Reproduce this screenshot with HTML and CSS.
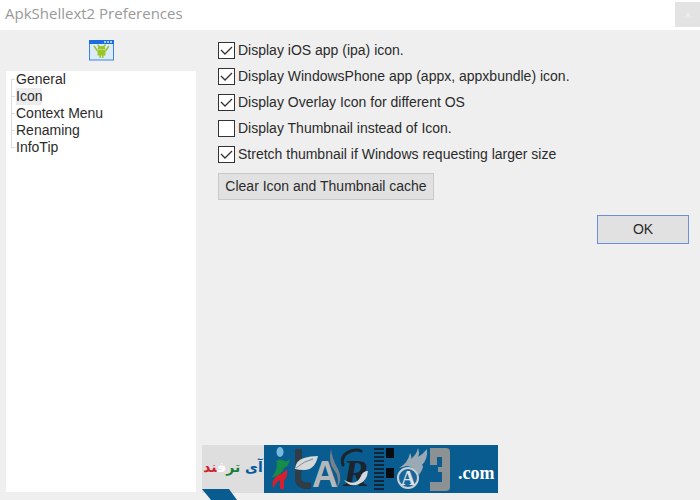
FILE: index.html
```
<!DOCTYPE html>
<html lang="en">
<head>
<meta charset="utf-8">
<title>ApkShellext2 Preferences</title>
<link rel="stylesheet" href="styles.css">
</head>
<body>
<header class="titlebar">
  <h1 class="title">ApkShellext2 Preferences</h1>
  <button class="close" type="button" aria-label="Close"><svg viewBox="0 0 8 8" width="8" height="8"><path d="M2 2l4 4M6 2l-4 4" stroke="#ececec" stroke-width="1.5"/></svg></button>
</header>
<main class="window">
  <aside class="sidebar">
    <svg class="app-icon" viewBox="0 0 25 21" width="25" height="21">
      <rect x=".5" y=".5" width="24" height="19.5" fill="#dcebfa" stroke="#3c82e8"/>
      <path d="M0 0h25v4H0z" fill="#1c6ee0"/>
      <path d="M15 1h2v2h-2zM18 1h2v2h-2zM21 1h2v2h-2z" fill="#a9cdf8"/>
      <path d="M8.500 9.500a4 3.500 0 0 1 8 0zM8.500 10h8v5.500h-2V18h-1.500v-2.500h-1V18h-1.500v-2.500h-2z" fill="#9bc527"/>
      <path d="M5.500 6.500l2.500 4M19.500 6.500l-2.500 4M9 5l1.500 2M16 5l-1.500 2" stroke="#9bc527" stroke-width="1.500" stroke-linecap="round"/>
    </svg>
    <nav class="tree">
      <ul class="tree-list">
        <li class="node"><a class="link" href="#general">General</a></li>
        <li class="node"><a class="link current" href="#icon">Icon</a></li>
        <li class="node"><a class="link" href="#context-menu">Context Menu</a></li>
        <li class="node"><a class="link" href="#renaming">Renaming</a></li>
        <li class="node"><a class="link" href="#infotip">InfoTip</a></li>
      </ul>
    </nav>
  </aside>
  <form class="options">
    <label class="option"><input class="box" type="checkbox" checked>Display iOS app (ipa) icon.</label>
    <label class="option"><input class="box" type="checkbox" checked>Display WindowsPhone app (appx, appxbundle) icon.</label>
    <label class="option"><input class="box" type="checkbox" checked>Display Overlay Icon for different OS</label>
    <label class="option"><input class="box" type="checkbox">Display Thumbnail instead of Icon.</label>
    <label class="option"><input class="box" type="checkbox" checked>Stretch thumbnail if Windows requesting larger size</label>
    <button class="button clear" type="button">Clear Icon and Thumbnail cache</button>
    <button class="button ok" type="button">OK</button>
  </form>
</main>
<div class="banner">
  <div class="brand" lang="fa" dir="rtl"><span class="blue">آی</span> <span class="green">تر</span><span class="white">ف</span><span class="red">ند</span></div>
  <svg class="art" viewBox="62 0 234 48" width="234" height="48">
    <ellipse cx="78" cy="7" rx="3.500" ry="5" fill="#78b9dc"/>
    <path d="M74 16q4-3 8 0 3 1 6-2-1 7-6 9-1 6-13 10 6-6 6-15z" fill="#168c46"/>
    <path d="M85 24q1 9-3 11v9h-4v-9q-4 2-7 9-2-10 5-14 5-1 9-6z" fill="#d91f2c"/>
    <path d="M93 4h7v10l-1 20q3 5 10 3v7q-15 1-16-9z" fill="#303c46"/>
    <path d="M93 24q1-9 9-11 6-2 14-2-3 14-14 14-5 0-9-1z" fill="#d5d9dc"/>
    <path d="M94 23q8-7 17-9" fill="none" stroke="#7f8d97"/>
    <path d="M129 4q-3 14 3 21 6 7 3 18 6-9 1-19-6-10-7-20z" fill="#74828c"/>
    <text x="110" y="42" class="serif-a">A</text>
    <text x="141" y="41" class="script-r">R</text>
    <path d="M141 20q-3-10 8-14 6-2 10 0" fill="none" stroke="#1c252d" stroke-width="3" stroke-linecap="round"/>
    <path d="M142 35q12 7 17-4 2-5 7-5-1 10-9 13-9 4-15-4z" fill="#d5d9dc"/>
    <path d="M177 3v43" stroke="#142637" stroke-width="10" stroke-dasharray="2 2"/>
    <path d="M184 3h8v10h-8zM184 23h8v10h-8z" fill="#080d12"/>
    <path d="M197 23q9-5 11-15 2 4 1 6 6-5 7-11 2 5 0 9 5-3 9-8 1 10-5 16 3 1-3 10-4-8-12-9z" fill="#9aaab5"/>
    <circle cx="206" cy="33" r="10" fill="#17659b" stroke="#c9d0d5" stroke-width="2"/>
    <text x="199" y="40" class="round-a">A</text>
    <path d="M228 3h16q4 0 4 4v35q0 4-4 4h-16v-9h12V27h-4v-5h4V12h-5v8h-7z" fill="#8c9193"/>
    <text x="256" y="34" class="domain">.com</text>
  </svg>
  <svg class="corner" viewBox="0 0 35 11" width="35" height="11"><path d="M0 0h27l8 11H9z" fill="#085c90"/></svg>
</div>
</body>
</html>
```
FILE: styles.css
```
* { box-sizing: border-box; }
body {
  margin: 0;
  min-height: 100vh;
  display: flex;
  flex-direction: column;
  position: relative;
  overflow: hidden;
  background: #efefef;
  color: #2b2b2b;
  font: 14px/17px "Liberation Sans", Arial, sans-serif;
}
.titlebar {
  display: flex;
  justify-content: space-between;
  height: 30px;
  padding: 2px 0 0 5px;
  background: #fff;
}
.title {
  margin: 0;
  font: 15px/22px "Open Sans", "Noto Sans", sans-serif;
  color: #999;
}
.close {
  width: 25px;
  height: 25px;
  padding: 0;
  border: 0;
  background: #e3e3e3;
}
.window {
  flex: 1;
  display: grid;
  grid-template-columns: 190px 1fr;
  gap: 22px;
  padding: 10px 11px 8px 6px;
}
.sidebar { display: flex; flex-direction: column; }
.app-icon { align-self: center; margin-bottom: 10px; }
.tree { flex: 1; background: #fff; }
.tree-list { margin: 0; padding: 0 0 0 5px; list-style: none; }
.node {
  display: flex;
  align-items: center;
  height: 17px;
  background:
    linear-gradient(#ddd, #ddd) 0 8px / 4px 1px no-repeat,
    linear-gradient(#ddd, #ddd) 0 0 / 1px 100% no-repeat;
  padding-left: 5px;
}
.node:first-child {
  background:
    linear-gradient(#ddd, #ddd) 0 8px / 4px 1px no-repeat,
    linear-gradient(#ddd, #ddd) 0 8px / 1px 9px no-repeat;
}
.node:last-child {
  background:
    linear-gradient(#ddd, #ddd) 0 8px / 4px 1px no-repeat,
    linear-gradient(#ddd, #ddd) 0 0 / 1px 9px no-repeat;
}
.link { color: inherit; text-decoration: none; }
.current { background: #ececec; }
.options { display: flex; flex-direction: column; align-items: flex-start; padding-top: 1px; }
.option { display: flex; align-items: center; gap: 3px; height: 18px; margin-bottom: 8px; }
.box {
  appearance: none;
  width: 17px;
  height: 17px;
  margin: 0;
  border: 1px solid #333;
  background: #fff;
}
.box:checked {
  background: #fff url("data:image/svg+xml,%3Csvg xmlns='http://www.w3.org/2000/svg' viewBox='0 0 15 15'%3E%3Cpath d='M2 7l4 4 7-7' fill='none' stroke='%23333' stroke-width='1.3'/%3E%3C/svg%3E");
}
.button { font: inherit; color: inherit; background: #e1e1e1; border: 1px solid #c8c8c8; padding: 0 6px; }
.clear { min-width: 216px; height: 27px; margin-top: 2px; }
.ok { align-self: flex-end; width: 92px; height: 29px; margin-top: 15px; border-color: #6b8fdc; }
.banner { position: absolute; left: 202px; bottom: 7px; display: flex; height: 48px; }
.brand {
  width: 62px;
  background: #dedede;
  font: bold 14px/44px "DejaVu Sans", sans-serif;
  text-align: center;
  white-space: nowrap;
}
.blue { color: #075a9c; }
.green { color: #16803a; }
.white { color: #fff; }
.red { color: #d3202a; }
.art { background: #085c90; }
.corner { position: absolute; left: 0; top: 44px; }
.serif-a { font: bold 36px "Liberation Sans", sans-serif; fill: #b4b8ba; }
.script-r { font: italic bold 38px "Liberation Serif", serif; fill: #1c252d; }
.round-a { font: bold 20px "Liberation Serif", serif; fill: #dce1e4; }
.domain { font: bold 18px "Liberation Serif", serif; fill: #fff; }
```
